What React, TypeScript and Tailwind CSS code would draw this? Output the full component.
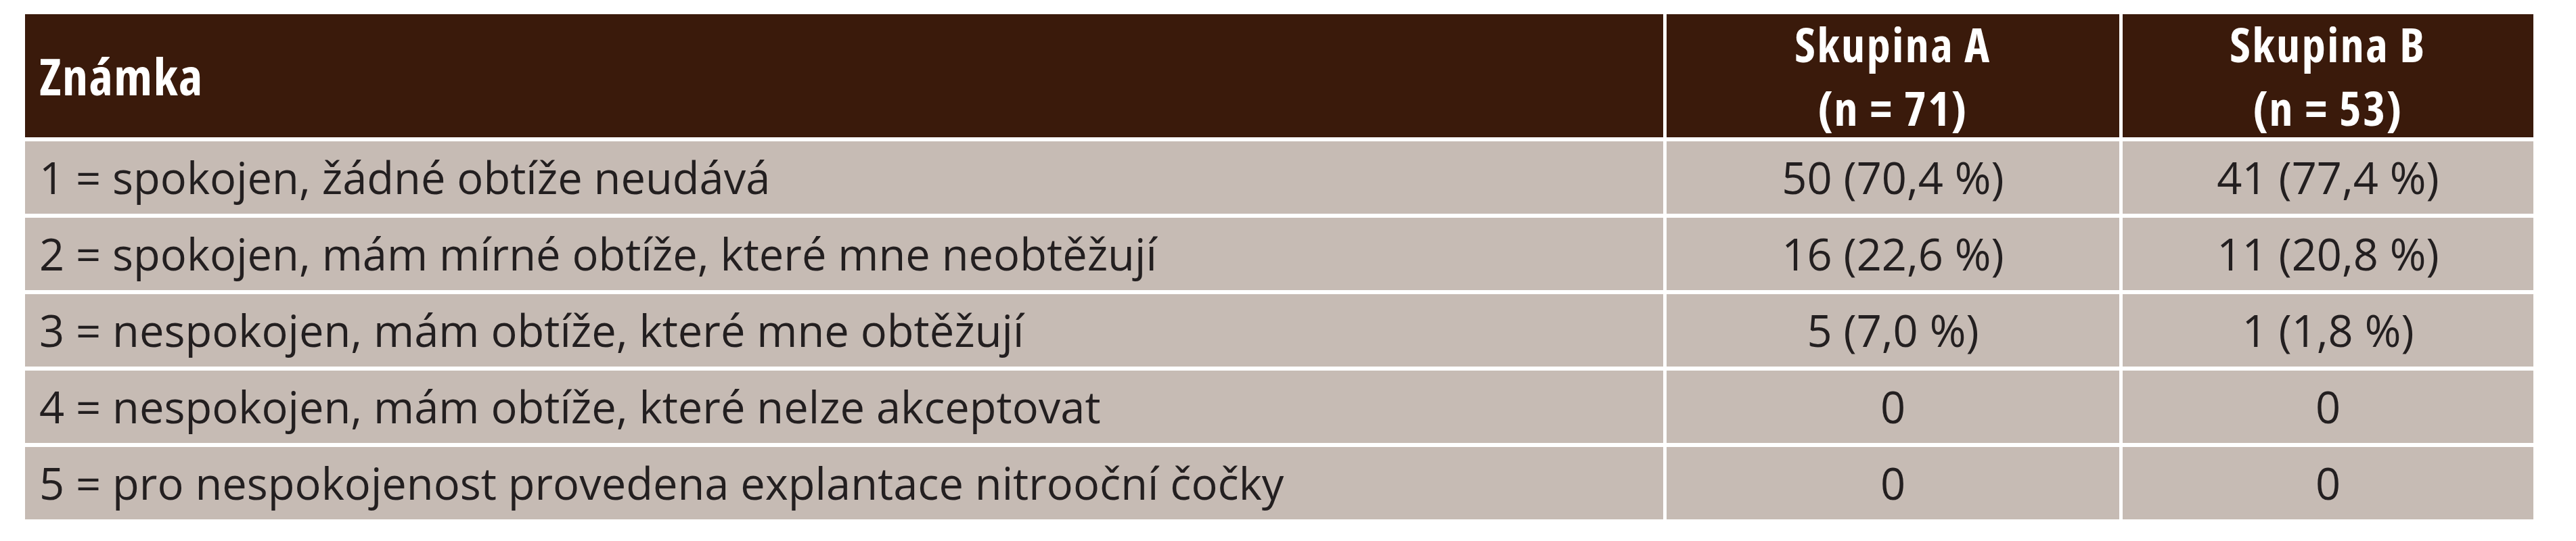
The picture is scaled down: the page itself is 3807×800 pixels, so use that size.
const ROWS: [string, string, string][] = [
  ["1 = spokojen, žádné obtíže neudává", "50 (70,4 %)", "41 (77,4 %)"],
  ["2 = spokojen, mám mírné obtíže, které mne neobtěžují", "16 (22,6 %)", "11 (20,8 %)"],
  ["3 = nespokojen, mám obtíže, které mne obtěžují", "5 (7,0 %)", "1 (1,8 %)"],
  ["4 = nespokojen, mám obtíže, které nelze akceptovat", "0", "0"],
  ["5 = pro nespokojenost provedena explantace nitrooční čočky", "0", "0"],
];

const bodyFont = "[font-family:'Open_Sans',sans-serif]";

export default function App() {
  return (
    <div className="w-[3807px] h-[800px] bg-white pt-[21px] pl-[37px]">
      <div className="grid grid-cols-[2421px_669px_607px] gap-x-[5px] gap-y-[6px] w-[3707px]">
        {/* header */}
        <div className="bg-[#3a1a0b] h-[182px] flex items-center pl-[21px] text-white text-[76px] font-bold leading-none tracking-[1.5px] [font-family:'Open_Sans',sans-serif] [font-stretch:75%]">
          Známka
        </div>
        <div className="bg-[#3a1a0b] h-[182px] flex flex-col items-center justify-center gap-[24px] text-white text-[70px] font-bold leading-none tracking-[2.5px] [font-family:'Open_Sans',sans-serif] [font-stretch:75%]">
          <span>Skupina A</span>
          <span>(n = 71)</span>
        </div>
        <div className="bg-[#3a1a0b] h-[182px] flex flex-col items-center justify-center gap-[24px] text-white text-[70px] font-bold leading-none tracking-[2.5px] [font-family:'Open_Sans',sans-serif] [font-stretch:75%]">
          <span>Skupina B</span>
          <span>(n = 53)</span>
        </div>

        {ROWS.map(([label, a, b]) => (
          <div key={label} className="contents">
            <div className={`bg-[#c6bbb4] h-[107px] flex items-center pl-[21px] text-[#231f20] text-[65px] leading-none ${bodyFont}`}>
              {label}
            </div>
            <div className={`bg-[#c6bbb4] h-[107px] flex items-center justify-center text-[#231f20] text-[65px] leading-none ${bodyFont}`}>
              {a}
            </div>
            <div className={`bg-[#c6bbb4] h-[107px] flex items-center justify-center text-[#231f20] text-[65px] leading-none ${bodyFont}`}>
              {b}
            </div>
          </div>
        ))}
      </div>
    </div>
  );
}
